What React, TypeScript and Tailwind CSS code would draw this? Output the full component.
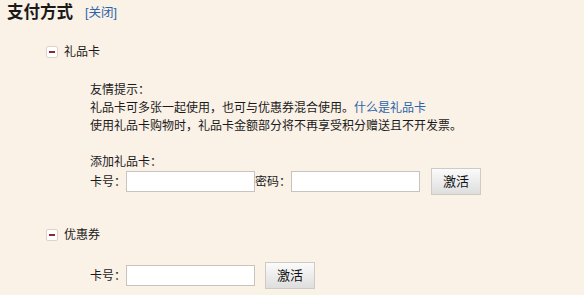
import React from 'react';

const font = { fontFamily: '"Liberation Sans", "Noto Sans CJK SC", sans-serif' };

function MinusBox() {
  return (
    <span className="inline-flex h-[12px] w-[12px] items-center justify-center rounded-[2px] border border-[#ddd3cc] bg-white">
      <span className="block h-[2px] w-[6px] bg-[#8c2a33]" />
    </span>
  );
}

function TextInput({ width }: { width: string }) {
  return (
    <input
      type="text"
      className={`h-[21px] ${width} border border-[#c8c3bd] bg-white outline-none`}
    />
  );
}

function ActivateButton() {
  return (
    <button className="h-[27px] w-[50px] border border-[#cfcac4] bg-gradient-to-b from-[#fbfbfb] to-[#dedede] text-[13px] text-[#111]">
      激活
    </button>
  );
}

export default function App() {
  return (
    <div className="h-[295px] w-[584px] bg-[#faf1e7] text-[12px] text-[#1a1a1a]" style={font}>
      <div className="flex items-end gap-3 pl-[7px] pt-[1px]">
        <h2 className="text-[16.5px] font-bold leading-[22px] text-[#1a1a1a]">支付方式</h2>
        <a className="text-[12.5px] leading-[20px] text-[#2c64a8]">[关闭]</a>
      </div>

      <div className="mt-[22px] flex items-center gap-[6px] pl-[46px]">
        <MinusBox />
        <span className="text-[12px] leading-[14px]">礼品卡</span>
      </div>

      <div className="mt-[22px] pl-[90px] leading-[18px]">
        <p>友情提示：</p>
        <p>
          礼品卡可多张一起使用，也可与优惠券混合使用。
          <a className="text-[#2c64a8]">什么是礼品卡</a>
        </p>
        <p>使用礼品卡购物时，礼品卡金额部分将不再享受积分赠送且不开发票。</p>
      </div>

      <div className="mt-[18px] pl-[90px]">
        <p className="leading-[18px]">添加礼品卡：</p>
        <div className="mt-[-3px] flex items-center">
          <span>卡号：</span>
          <TextInput width="w-[129px]" />
          <span>密码：</span>
          <TextInput width="w-[129px]" />
          <span className="ml-[11px]">
            <ActivateButton />
          </span>
        </div>
      </div>

      <div className="mt-[33px] flex items-center gap-[6px] pl-[46px]">
        <MinusBox />
        <span className="text-[12px] leading-[14px]">优惠券</span>
      </div>

      <div className="mt-[20px] flex items-center pl-[90px]">
        <span>卡号：</span>
        <TextInput width="w-[129px]" />
        <span className="ml-[10px]">
          <ActivateButton />
        </span>
      </div>
    </div>
  );
}
